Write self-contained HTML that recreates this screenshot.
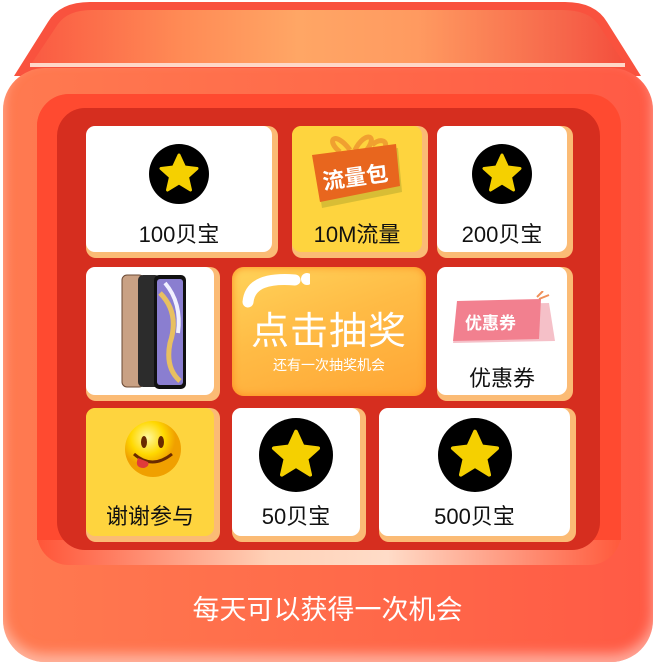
<!DOCTYPE html>
<html><head><meta charset="utf-8"><style>
*{margin:0;padding:0;box-sizing:border-box}
body{width:655px;height:662px;overflow:hidden;background:#fff;position:relative;font-family:"Liberation Sans","Noto Sans CJK SC",sans-serif}
.abs{position:absolute}
.body{left:3px;top:68px;width:650px;height:594px;border-radius:42px;background:linear-gradient(90deg,#ff7a50,#ff6b4a 50%,#ff5a45);box-shadow:inset 0 -8px 12px rgba(255,220,210,.6)}
.frame{left:37px;top:94px;width:584px;height:471px;border-radius:32px;background:linear-gradient(90deg,#ff5538,#ffd2b8 40%,#ffdcc8 60%,#ff5a3c)}
.frametop{left:37px;top:94px;width:584px;height:446px;border-radius:32px 32px 0 0;background:#ff4a30}
.dark{left:57px;top:108px;width:543px;height:442px;border-radius:28px;background:#d62e1f}
.card{position:absolute;border-radius:10px;background:#fbbb75}
.card .in{position:absolute;left:0;top:0;right:6px;bottom:6px;border-radius:9px;background:#fff;text-align:center}
.card.y .in{background:#fed43e}
.lbl{position:absolute;left:0;right:0;font-size:22px;color:#111;text-align:center}
.star{position:absolute;left:50%;transform:translateX(-50%)}
.bottom{left:0;width:655px;top:588px;text-align:center;font-size:27px;color:#fff}
</style></head><body>
<svg class="abs" style="left:0;top:0" width="655" height="80" viewBox="0 0 655 80"><defs><linearGradient id="lg" x1="0" x2="1"><stop offset="0" stop-color="#fa5a42"/><stop offset=".25" stop-color="#ff8a55"/><stop offset=".45" stop-color="#ffa665"/><stop offset=".65" stop-color="#ff9a60"/><stop offset=".9" stop-color="#f6654a"/><stop offset="1" stop-color="#f44e3c"/></linearGradient></defs>
<path d="M14 76 L48 22 Q60 2 90 2 L565 2 Q595 2 607 22 L641 76 Z" fill="#f9523e"/>
<path d="M30 66 L58 24 Q68 10 92 10 L562 10 Q588 10 598 24 L626 66 Z" fill="url(#lg)"/>
<rect x="30" y="63" width="595" height="4" fill="#ffd8c8"/></svg>
<div class="abs body"></div>
<div class="abs frame"></div>
<div class="abs frametop"></div>
<div class="abs dark"></div>

<!-- row1 -->
<div class="card" style="left:86px;top:126px;width:192px;height:132px"><div class="in">
<svg class="star" style="top:18px" width="60" height="60" viewBox="0 0 60 60"><ellipse cx="30" cy="30" rx="30" ry="30"/><path d="M30 11 L35.5 23 L48 24.5 L38.5 33 L41.5 46 L30 39 L18.5 46 L21.5 33 L12 24.5 L24.5 23Z" fill="#f5d000" stroke="#f5d000" stroke-width="3" stroke-linejoin="round"/></svg>
<div class="lbl" style="top:91px">100贝宝</div></div></div>

<div class="card y" style="left:292px;top:126px;width:136px;height:132px"><div class="in">
<svg class="abs" style="left:18px;top:4px" width="95" height="80" viewBox="0 0 95 80"><path d="M40 20 C25 0,15 10,30 22 M45 20 C55 0,70 5,55 22 M62 15 C70 8,78 10,75 18" stroke="#f0a030" stroke-width="5" fill="none"/><path d="M4 28 L88 18 L92 62 L12 78Z" fill="#d8bd35"/><path d="M2 25 L86 14 L90 56 L10 72Z" fill="#e8661e"/><text x="12" y="55" font-size="22" font-weight="bold" fill="#fff" transform="rotate(-8 45 45)" font-family="Noto Sans CJK SC,sans-serif">流量包</text></svg>
<div class="lbl" style="top:91px">10M流量</div></div></div>

<div class="card" style="left:437px;top:126px;width:136px;height:132px"><div class="in">
<svg class="star" style="top:18px" width="60" height="60" viewBox="0 0 60 60"><ellipse cx="30" cy="30" rx="30" ry="30"/><path d="M30 11 L35.5 23 L48 24.5 L38.5 33 L41.5 46 L30 39 L18.5 46 L21.5 33 L12 24.5 L24.5 23Z" fill="#f5d000" stroke="#f5d000" stroke-width="3" stroke-linejoin="round"/></svg>
<div class="lbl" style="top:91px">200贝宝</div></div></div>

<!-- row2 -->
<div class="card" style="left:86px;top:267px;width:134px;height:134px"><div class="in">
<svg class="abs" style="left:34px;top:6px" width="68" height="118" viewBox="0 0 68 118"><rect x="2" y="2" width="22" height="112" rx="5" fill="#c9a184" stroke="#6b4a35"/><rect x="18" y="2" width="22" height="112" rx="5" fill="#2c2c2c"/><rect x="34" y="2" width="32" height="114" rx="5" fill="#111"/><rect x="37" y="6" width="26" height="106" rx="3" fill="#8a7ed0"/><path d="M40 20 Q60 40 50 70 Q45 95 60 108" stroke="#e8c060" stroke-width="5" fill="none"/><path d="M45 10 Q62 30 58 60" stroke="#f0f0ff" stroke-width="4" fill="none"/></svg>
</div></div>

<div class="abs" style="left:232px;top:267px;width:194px;height:129px;border-radius:12px;background:linear-gradient(160deg,#ffd35a 0%,#ffbb45 45%,#ffa535 100%);box-shadow:inset 0 0 8px #ff8a20"></div>
<svg class="abs" style="left:240px;top:270px" width="70" height="40" viewBox="0 0 70 40"><path d="M8 32 C10 12,30 8,55 10" stroke="#fff" stroke-width="11" stroke-linecap="round" fill="none"/><circle cx="67" cy="9" r="6" fill="#fff"/></svg>
<div class="abs" style="left:232px;top:300px;width:194px;text-align:center;font-size:38px;color:#fff;letter-spacing:1px">点击抽奖</div>
<div class="abs" style="left:232px;top:355px;width:194px;text-align:center;font-size:14px;color:#fff">还有一次抽奖机会</div>

<div class="card" style="left:437px;top:267px;width:136px;height:134px"><div class="in">
<svg class="abs" style="left:14px;top:24px" width="110" height="60" viewBox="0 0 110 60"><path d="M8 14 L98 12 L104 50 L2 52Z" fill="#f5c0c8"/><path d="M6 10 L90 8 L88 48 L2 50Z" fill="#f2808f"/><path d="M86 6 L92 0 M88 8 L98 4" stroke="#f0905a" stroke-width="2"/><text x="14" y="38" font-size="17" font-weight="bold" fill="#fff" font-family="Noto Sans CJK SC,sans-serif">优惠券</text></svg>
<div class="lbl" style="top:94px">优惠券</div></div></div>

<!-- row3 -->
<div class="card y" style="left:86px;top:408px;width:134px;height:134px"><div class="in">
<svg class="abs" style="left:38px;top:12px" width="58" height="58" viewBox="0 0 58 58"><defs><radialGradient id="f" cx="40%" cy="30%"><stop offset="0" stop-color="#fff8a0"/><stop offset=".6" stop-color="#ffd800"/><stop offset="1" stop-color="#f0a000"/></radialGradient></defs><circle cx="29" cy="29" r="28" fill="url(#f)"/><ellipse cx="20" cy="22" rx="3" ry="6" fill="#6a2a00"/><ellipse cx="37" cy="22" rx="3" ry="6" fill="#6a2a00"/><path d="M10 34 Q28 50 48 34" stroke="#6a2a00" stroke-width="3" fill="none"/><path d="M14 38 Q10 48 20 48 Q26 46 24 42Z" fill="#e03a3a"/></svg>
<div class="lbl" style="top:91px">谢谢参与</div></div></div>

<div class="card" style="left:232px;top:408px;width:134px;height:134px"><div class="in">
<svg class="star" style="top:10px" width="74" height="74" viewBox="0 0 60 60"><circle cx="30" cy="30" r="30"/><path d="M30 11 L35.5 23 L48 24.5 L38.5 33 L41.5 46 L30 39 L18.5 46 L21.5 33 L12 24.5 L24.5 23Z" fill="#f5d000" stroke="#f5d000" stroke-width="3" stroke-linejoin="round"/></svg>
<div class="lbl" style="top:91px">50贝宝</div></div></div>

<div class="card" style="left:379px;top:408px;width:197px;height:134px"><div class="in">
<svg class="star" style="top:10px" width="74" height="74" viewBox="0 0 60 60"><circle cx="30" cy="30" r="30"/><path d="M30 11 L35.5 23 L48 24.5 L38.5 33 L41.5 46 L30 39 L18.5 46 L21.5 33 L12 24.5 L24.5 23Z" fill="#f5d000" stroke="#f5d000" stroke-width="3" stroke-linejoin="round"/></svg>
<div class="lbl" style="top:91px">500贝宝</div></div></div>

<div class="abs bottom">每天可以获得一次机会</div>
</body></html>
